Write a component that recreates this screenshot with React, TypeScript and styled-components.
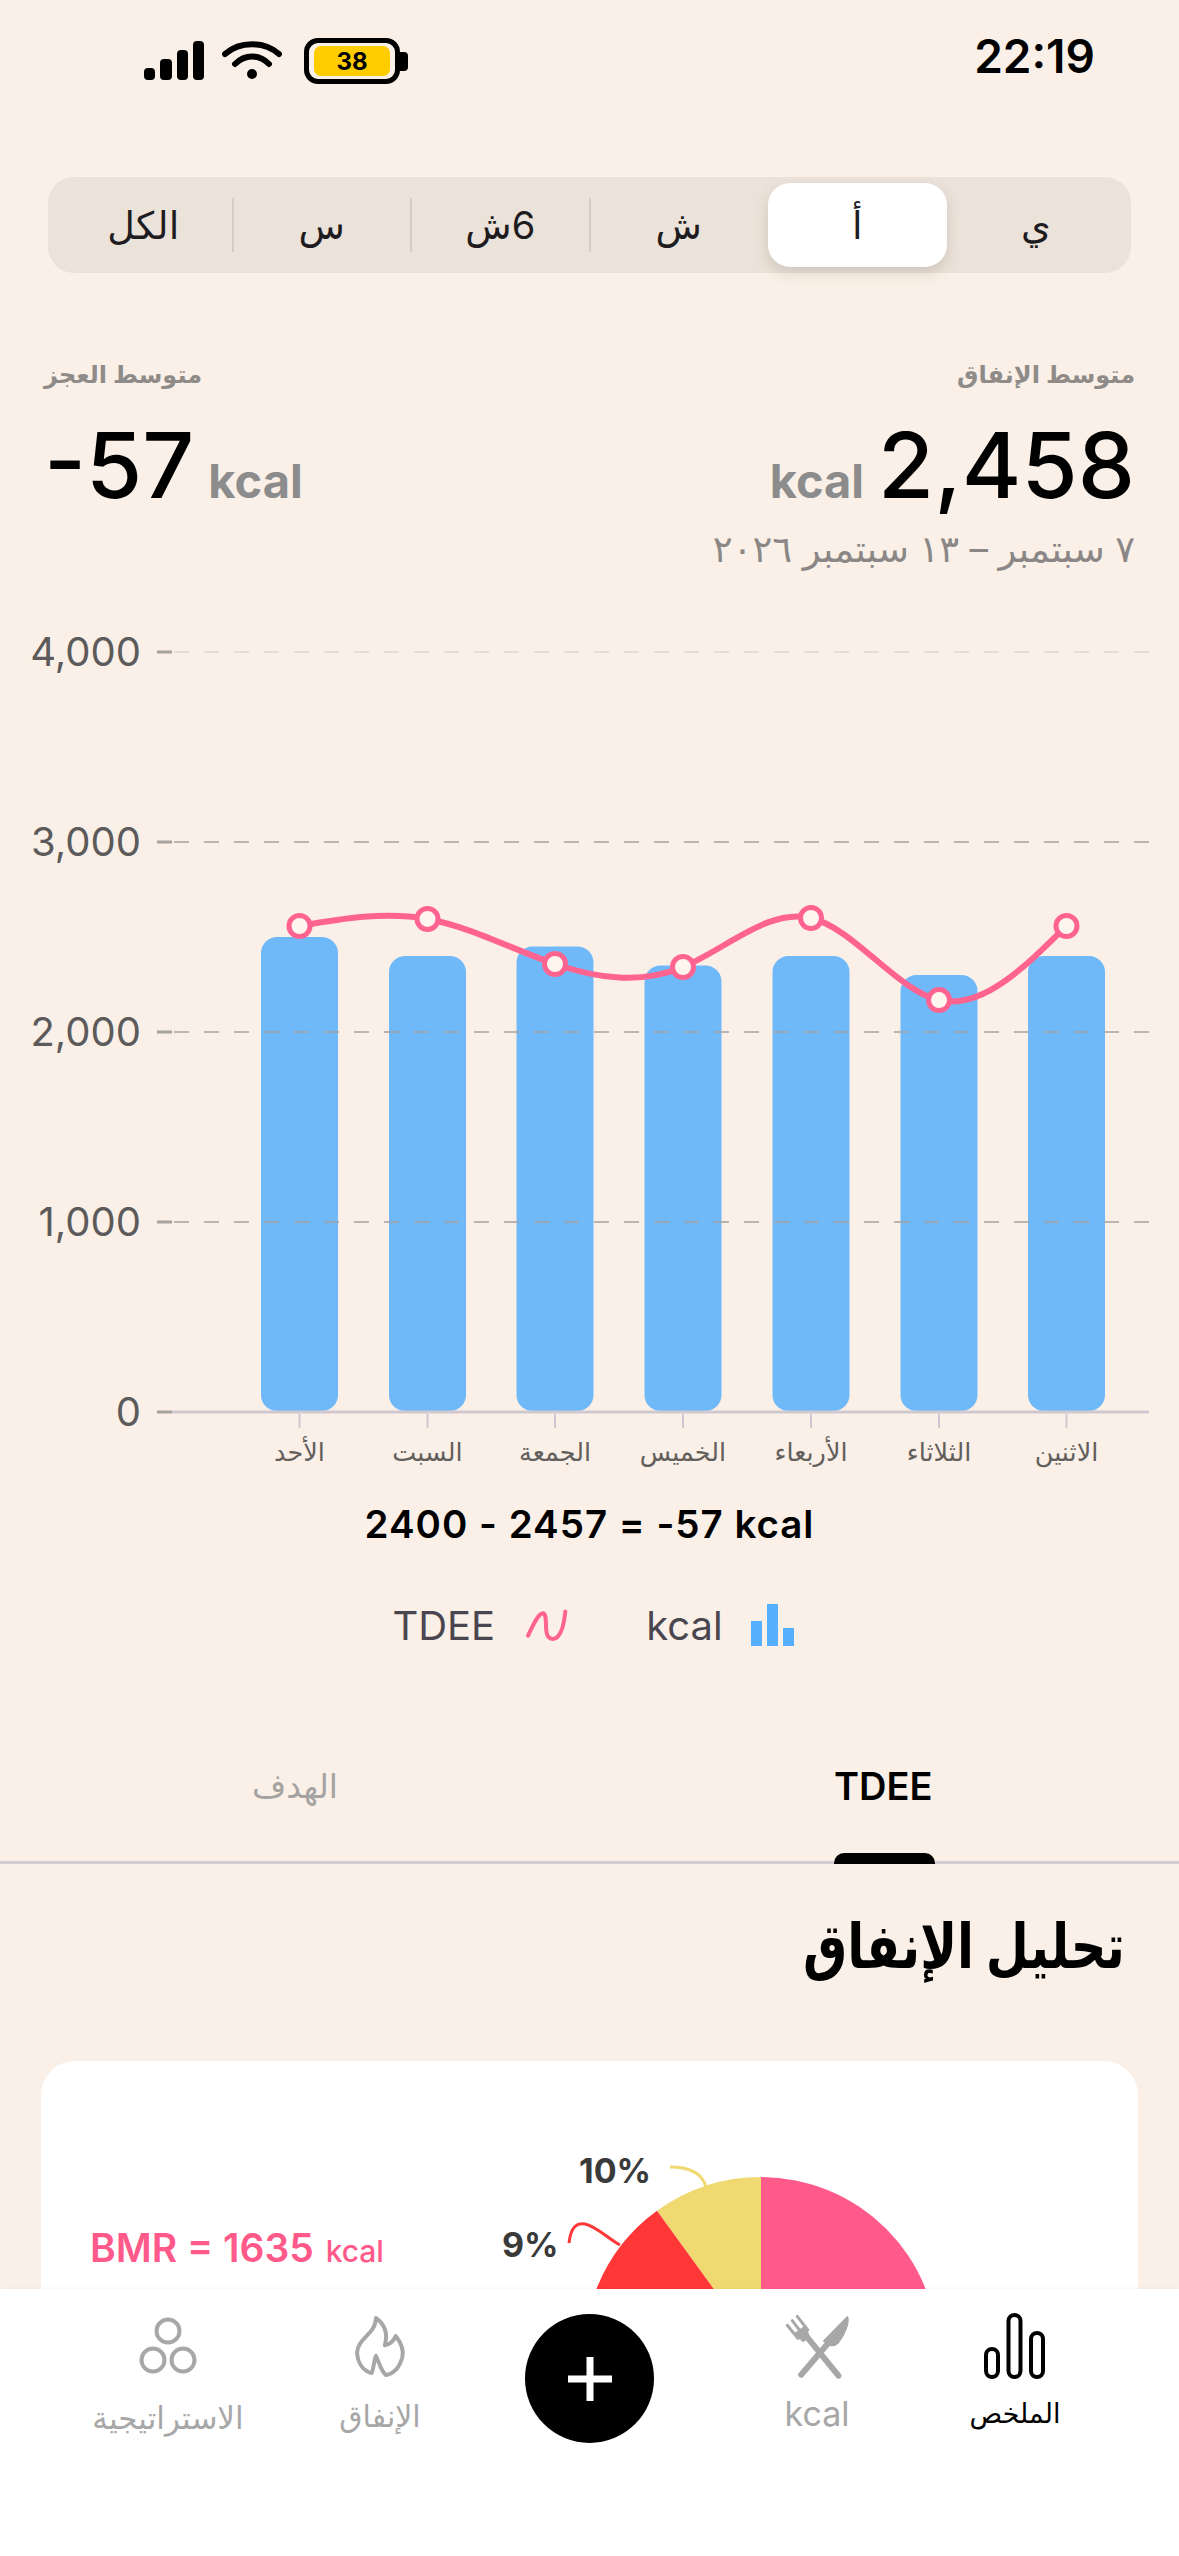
import React from 'react';
import styled, { createGlobalStyle } from 'styled-components';

const GlobalStyle = createGlobalStyle`
  html, body {
    margin: 0;
    padding: 0;
    background: #faf0e7;
    font-family: Inter, "DejaVu Sans", sans-serif;
  }
`;

const Page = styled.div`
  position: relative;
  width: 1179px;
  height: 2556px;
  overflow: hidden;
  background: #faf0e7;
`;

const StatusBar = styled.div`
  display: flex;
  justify-content: space-between;
  align-items: center;
  height: 112px;
  padding: 0 84px 0 144px;
  box-sizing: border-box;
`;

const StatusIcons = styled.div`
  display: flex;
  align-items: center;
  gap: 18px;
  margin-top: 10px;
`;

const Battery = styled.div`
  position: relative;
  display: flex;
  align-items: center;
  justify-content: center;
  width: 96px;
  height: 46px;
  margin-left: 4px;
  box-sizing: border-box;
  border: 5px solid #000;
  border-radius: 14px;

  &::before {
    content: '';
    position: absolute;
    right: -13px;
    top: 9px;
    width: 8px;
    height: 19px;
    background: #000;
    border-radius: 0 4px 4px 0;
  }
`;

const BatteryFill = styled.div`
  display: flex;
  align-items: center;
  justify-content: center;
  width: 76px;
  height: 30px;
  background: #ffcc00;
  border-radius: 7px;
  font-size: 24px;
  font-weight: 700;
  color: #000;
`;

const Clock = styled.div`
  font-size: 46px;
  font-weight: 600;
  color: #000;
`;

const Segments = styled.div`
  direction: rtl;
  display: flex;
  margin: 65px 48px 0;
  height: 96px;
  padding: 6px;
  box-sizing: border-box;
  background: #ebe2d9;
  border-radius: 26px;
`;

const Segment = styled.div<{ $active?: boolean; $divider?: boolean }>`
  position: relative;
  flex: 1;
  display: flex;
  align-items: center;
  justify-content: center;
  font-size: 38px;
  color: #1e1c1f;
  border-radius: 22px;
  background: ${props => (props.$active ? '#fff' : 'transparent')};
  box-shadow: ${props => (props.$active ? '0 6px 14px rgba(90, 70, 60, 0.18)' : 'none')};

  &::after {
    content: '';
    display: ${props => (props.$divider ? 'block' : 'none')};
    position: absolute;
    left: -1px;
    top: 15px;
    width: 2px;
    height: 54px;
    background: #d5cdc4;
  }
`;

const Stats = styled.div`
  direction: rtl;
  display: flex;
  justify-content: space-between;
  height: 347px;
  padding: 84px 44px 0 44px;
  box-sizing: border-box;
`;

const StatColumn = styled.div<{ $end?: boolean }>`
  display: flex;
  flex-direction: column;
  align-items: ${props => (props.$end ? 'flex-end' : 'flex-start')};
`;

const StatLabel = styled.div`
  font-size: 24px;
  line-height: 36px;
  font-weight: 600;
  color: #8f8b88;
`;

const StatValueRow = styled.div`
  direction: ltr;
  display: flex;
  align-items: baseline;
  gap: 14px;
  margin-top: 20px;
`;

const StatValue = styled.span`
  font-size: 91px;
  line-height: 104px;
  font-weight: 500;
  color: #000;
`;

const StatUnit = styled.span`
  font-size: 47px;
  font-weight: 700;
  color: #8c8c8c;
`;

const StatRange = styled.div`
  font-size: 37px;
  line-height: 44px;
  margin-top: 10px;
  color: #8a8786;
`;

const ChartSvg = styled.svg`
  display: block;
  width: 1179px;
  height: 860px;
`;

const AxisLabel = styled.text`
  font-size: 40px;
  fill: #5c5a5a;
  text-anchor: end;
`;

const DayLabel = styled.text`
  font-size: 25.5px;
  fill: #625e5c;
  text-anchor: middle;
`;

const Formula = styled.div`
  margin-top: 18px;
  text-align: center;
  font-size: 38.5px;
  line-height: 52px;
  font-weight: 600;
  letter-spacing: 1px;
  color: #000;
`;

const Legend = styled.div`
  display: flex;
  justify-content: center;
  align-items: center;
  gap: 76px;
  margin-top: 50px;
  padding-left: 8px;
  height: 50px;
`;

const LegendItem = styled.div`
  display: flex;
  align-items: center;
  gap: 28px;
  font-size: 40px;
  color: #4a4650;
`;

const Tabs = styled.div`
  display: grid;
  grid-template-columns: 589px 590px;
  height: 214px;
  border-bottom: 3px solid #d3ccd0;
  box-sizing: border-box;
  padding-top: 111px;
`;

const Tab = styled.div<{ $active?: boolean }>`
  position: relative;
  padding-left: ${props => (props.$active ? '245px' : '252px')};
  height: 100px;
  font-size: ${props => (props.$active ? '38px' : '33px')};
  line-height: 50px;
  font-weight: ${props => (props.$active ? 600 : 400)};
  color: ${props => (props.$active ? '#000' : '#a5a3a1')};

  &::after {
    content: '';
    display: ${props => (props.$active ? 'block' : 'none')};
    position: absolute;
    left: 245px;
    bottom: -3px;
    width: 101px;
    height: 11px;
    background: #000;
    border-radius: 10px 10px 0 0;
  }
`;

const SectionTitle = styled.h2`
  direction: rtl;
  margin: 39px 54px 0 0;
  height: 142px;
  font-size: 62px;
  line-height: 86px;
  font-weight: 700;
  color: #000;
  transform: scaleX(0.8);
  transform-origin: right center;
`;

const Card = styled.div`
  display: grid;
  grid-template-columns: 449px 1fr;
  margin: 16px 41px 0;
  height: 500px;
  background: #fff;
  border-radius: 34px;
`;

const BmrLabel = styled.div`
  padding: 160px 0 0 49px;
  font-size: 39px;
  line-height: 54px;
  font-weight: 600;
  color: #ff5a8a;
`;

const BmrUnit = styled.span`
  font-size: 30px;
  font-weight: 500;
  margin-left: 2px;
`;

const PieSvg = styled.svg`
  display: block;
  width: 470px;
  height: 300px;
  margin-top: 89px;
`;

const PieLabel = styled.text`
  font-size: 34px;
  font-weight: 700;
  fill: #3a3a3a;
`;

const BottomNav = styled.nav`
  position: absolute;
  left: 0;
  right: 0;
  bottom: 0;
  height: 267px;
  direction: rtl;
  display: grid;
  grid-template-columns: 200px 196px 259px 160px 264px;
  align-items: start;
  padding: 21px 64px 0 0;
  box-sizing: border-box;
  background: #fff;
  box-shadow: 0 -1px 3px rgba(0, 0, 0, 0.03);
`;

const NavItem = styled.div<{ $active?: boolean }>`
  display: flex;
  flex-direction: column;
  align-items: center;
  color: ${props => (props.$active ? '#000' : '#a7a7a7')};
`;

const NavLabel = styled.span<{ $size: number; $drop?: number }>`
  font-size: ${props => props.$size}px;
  line-height: 40px;
  margin-top: ${props => props.$drop ?? 0}px;
`;

const NavIconSlot = styled.div`
  display: flex;
  align-items: center;
  justify-content: center;
  height: 72px;
  margin-bottom: 12px;
`;

const AddButton = styled.div`
  justify-self: center;
  display: flex;
  align-items: center;
  justify-content: center;
  width: 129px;
  height: 129px;
  margin-top: 4px;
  border-radius: 50%;
  background: #000;
`;

const Y_BASE = 1412;
const Y_SCALE = 0.19;
const yOf = (value: number) => Y_BASE - value * Y_SCALE;

const days = [
  { name: 'الأحد', x: 299.5, intake: 2500, tdee: 2558 },
  { name: 'السبت', x: 427.5, intake: 2400, tdee: 2595 },
  { name: 'الجمعة', x: 555, intake: 2450, tdee: 2358 },
  { name: 'الخميس', x: 683, intake: 2350, tdee: 2342 },
  { name: 'الأربعاء', x: 811, intake: 2400, tdee: 2600 },
  { name: 'الثلاثاء', x: 939, intake: 2300, tdee: 2168 },
  { name: 'الاثنين', x: 1066.5, intake: 2400, tdee: 2558 },
];

// same maths as d3's curveNatural
function naturalControls(x: number[]): [number[], number[]] {
  const n = x.length - 1;
  const a: number[] = [0];
  const b: number[] = [2];
  const r: number[] = [x[0] + 2 * x[1]];
  for (let i = 1; i < n - 1; i++) {
    a[i] = 1;
    b[i] = 4;
    r[i] = 4 * x[i] + 2 * x[i + 1];
  }
  a[n - 1] = 2;
  b[n - 1] = 7;
  r[n - 1] = 8 * x[n - 1] + x[n];
  for (let i = 1; i < n; i++) {
    const m = a[i] / b[i - 1];
    b[i] -= m;
    r[i] -= m * r[i - 1];
  }
  a[n - 1] = r[n - 1] / b[n - 1];
  for (let i = n - 2; i >= 0; i--) a[i] = (r[i] - a[i + 1]) / b[i];
  b[n - 1] = (x[n] + a[n - 1]) / 2;
  for (let i = 0; i < n - 1; i++) b[i] = 2 * x[i + 1] - a[i + 1];
  return [a, b];
}

function tdeePath(): string {
  const xs = days.map(d => d.x);
  const ys = days.map(d => yOf(d.tdee));
  const [ax, bx] = naturalControls(xs);
  const [ay, by] = naturalControls(ys);
  let path = `M${xs[0]} ${ys[0]}`;
  for (let i = 0; i < xs.length - 1; i++) {
    path += `C${ax[i]} ${ay[i]} ${bx[i]} ${by[i]} ${xs[i + 1]} ${ys[i + 1]}`;
  }
  return path;
}

const Chart = () => (
  <ChartSvg viewBox="0 620 1179 860">
    {days.map(d => (
      <rect
        key={d.name}
        x={d.x - 38.5}
        y={yOf(d.intake)}
        width={77}
        height={Y_BASE - yOf(d.intake) - 1}
        rx={16}
        fill="#70b9f9"
      />
    ))}
    {[4000, 3000, 2000, 1000, 0].map(tick => (
      <g key={tick}>
        <AxisLabel x={141} y={yOf(tick) + 14}>{tick.toLocaleString('en-US')}</AxisLabel>
        {tick > 0 && (
          <line
            x1={174}
            x2={1149}
            y1={yOf(tick)}
            y2={yOf(tick)}
            stroke={tick === 4000 ? '#e0d8d0' : '#a5a19e'}
            strokeWidth={1.5}
            strokeDasharray="15 15"
          />
        )}
        <rect x={157} y={yOf(tick) - 1.5} width={15} height={3} fill="#a6a29e" />
      </g>
    ))}
    <rect x={172} y={Y_BASE - 1.5} width={977} height={3} fill="#cfc8d0" />
    {days.map(d => (
      <g key={d.name}>
        <rect x={d.x - 1} y={Y_BASE + 2} width={2} height={14} fill="#cfc8d0" />
        <DayLabel x={d.x} y={1461}>{d.name}</DayLabel>
      </g>
    ))}
    <path d={tdeePath()} fill="none" stroke="#ff6491" strokeWidth={6} />
    {days.map(d => (
      <circle key={d.name} cx={d.x} cy={yOf(d.tdee)} r={10.5} fill="#fdf5ee" stroke="#ff6491" strokeWidth={5} />
    ))}
  </ChartSvg>
);

const PIE_X = 761;
const PIE_Y = 2354;
const PIE_R = 177;

function slice(fromDeg: number, toDeg: number): string {
  const point = (deg: number) => {
    const rad = (deg * Math.PI) / 180;
    return `${PIE_X + PIE_R * Math.sin(rad)} ${PIE_Y - PIE_R * Math.cos(rad)}`;
  };
  return `M${PIE_X} ${PIE_Y}L${point(fromDeg)}A${PIE_R} ${PIE_R} 0 0 1 ${point(toDeg)}Z`;
}

const Pie = () => (
  <PieSvg viewBox="490 2150 470 300">
    <path d={slice(0, 179.9)} fill="#ff5a8a" />
    <path d={slice(-36, 0)} fill="#f1d972" />
    <path d={slice(-68.4, -36)} fill="#ff3737" />
    <path d={slice(-180, -68.4)} fill="#f5873a" />
    <path d="M670 2167C688 2167 702 2172 706 2187" fill="none" stroke="#f1d972" strokeWidth={3} />
    <path d="M569 2243C571 2226 577 2223 585 2224C596 2226 610 2240 620 2245" fill="none" stroke="#ff3737" strokeWidth={3} />
    <PieLabel x={579} y={2183}>10%</PieLabel>
    <PieLabel x={502} y={2257}>9%</PieLabel>
  </PieSvg>
);

const SignalIcon = () => (
  <svg width="60" height="40" viewBox="0 0 60 40">
    <rect x="0" y="27" width="11" height="12" rx="4" fill="#000" />
    <rect x="16" y="18" width="12" height="21" rx="4" fill="#000" />
    <rect x="33" y="9" width="11" height="30" rx="4" fill="#000" />
    <rect x="49" y="0" width="11" height="39" rx="4" fill="#000" />
  </svg>
);

const WifiIcon = () => (
  <svg width="60" height="40" viewBox="0 0 60 40">
    <path d="M3 13C18 0 42 0 57 13" fill="none" stroke="#000" strokeWidth="6" strokeLinecap="round" />
    <path d="M13 23C23 13 37 13 47 23" fill="none" stroke="#000" strokeWidth="6" strokeLinecap="round" />
    <circle cx="30" cy="33" r="5" fill="#000" />
  </svg>
);

const FlameIcon = () => (
  <svg width="58" height="66" viewBox="660 30 175 200">
    <path
      d="M735 45C770 70 770 100 762 128C780 125 790 112 795 100C815 125 820 145 815 165C805 200 785 215 765 218C750 205 745 180 735 160C728 175 730 195 722 212C695 205 680 180 678 150C680 105 735 95 735 45Z"
      fill="none"
      stroke="#a7a7a7"
      strokeWidth="12"
      strokeLinejoin="round"
    />
  </svg>
);

const StrategyIcon = () => (
  <svg width="58" height="58" viewBox="0 0 58 58" fill="none" stroke="#a7a7a7" strokeWidth="4">
    <circle cx="29" cy="14" r="11.5" />
    <circle cx="14" cy="43" r="11.5" />
    <circle cx="44" cy="43" r="11.5" />
  </svg>
);

const CutleryIcon = () => (
  <svg width="66" height="66" viewBox="40 25 200 200" fill="#a7a7a7" stroke="#a7a7a7" strokeLinecap="round">
    <path d="M92 212L175 115" strokeWidth="18" />
    <path d="M232 36C240 50 225 90 205 115C195 125 185 125 175 122L160 110Z" strokeWidth="4" strokeLinejoin="round" />
    <path d="M205 215L105 92" strokeWidth="18" />
    <path d="M50 62L82 102M65 48L97 90M80 35L112 76" strokeWidth="9" />
    <path d="M70 88L106 62L118 100L98 112Z" strokeWidth="2" />
  </svg>
);

const SummaryIcon = () => (
  <svg width="62" height="66" viewBox="0 0 62 66" fill="none" stroke="#000" strokeWidth="4">
    <rect x="2" y="36" width="12" height="28" rx="6" />
    <rect x="24.5" y="2" width="12" height="62" rx="6" />
    <rect x="47" y="20" width="12" height="44" rx="6" />
  </svg>
);

const SquiggleIcon = () => (
  <svg width="47" height="34" viewBox="60 30 140 100">
    <path d="M75 112C90 80 105 45 120 45C135 50 122 100 135 115C150 130 178 125 186 40" fill="none" stroke="#ff6491" strokeWidth="12" strokeLinecap="round" />
  </svg>
);

const BarsIcon = () => (
  <svg width="44" height="42" viewBox="0 0 44 42" fill="#56b0ff">
    <rect x="0" y="17" width="11" height="25" />
    <rect x="16" y="0" width="11" height="42" />
    <rect x="32" y="24" width="11" height="18" />
  </svg>
);

export default function App() {
  return (
    <>
      <GlobalStyle />
      <Page>
        <StatusBar>
          <StatusIcons>
            <SignalIcon />
            <WifiIcon />
            <Battery>
              <BatteryFill>38</BatteryFill>
            </Battery>
          </StatusIcons>
          <Clock>22:19</Clock>
        </StatusBar>

        <Segments>
          <Segment>ي</Segment>
          <Segment $active>أ</Segment>
          <Segment $divider>ش</Segment>
          <Segment $divider>6ش</Segment>
          <Segment $divider>س</Segment>
          <Segment>الكل</Segment>
        </Segments>

        <Stats>
          <StatColumn>
            <StatLabel>متوسط الإنفاق</StatLabel>
            <StatValueRow>
              <StatUnit>kcal</StatUnit>
              <StatValue>2,458</StatValue>
            </StatValueRow>
            <StatRange>٧ سبتمبر – ١٣ سبتمبر ٢٠٢٦</StatRange>
          </StatColumn>
          <StatColumn $end>
            <StatLabel>متوسط العجز</StatLabel>
            <StatValueRow>
              <StatValue>-57</StatValue>
              <StatUnit>kcal</StatUnit>
            </StatValueRow>
          </StatColumn>
        </Stats>

        <Chart />

        <Formula>2400 - 2457 = -57 kcal</Formula>

        <Legend>
          <LegendItem>TDEE <SquiggleIcon /></LegendItem>
          <LegendItem>kcal <BarsIcon /></LegendItem>
        </Legend>

        <Tabs>
          <Tab>الهدف</Tab>
          <Tab $active>TDEE</Tab>
        </Tabs>

        <SectionTitle>تحليل الإنفاق</SectionTitle>

        <Card>
          <BmrLabel>BMR = 1635 <BmrUnit>kcal</BmrUnit></BmrLabel>
          <Pie />
        </Card>

        <BottomNav>
          <NavItem $active>
            <NavIconSlot><SummaryIcon /></NavIconSlot>
            <NavLabel $size={27}>الملخص</NavLabel>
          </NavItem>
          <NavItem>
            <NavIconSlot><CutleryIcon /></NavIconSlot>
            <NavLabel $size={34}>kcal</NavLabel>
          </NavItem>
          <AddButton>
            <svg width="44" height="44" viewBox="0 0 44 44" fill="#fff">
              <rect x="18.5" y="0" width="7" height="44" />
              <rect x="0" y="18.5" width="44" height="7" />
            </svg>
          </AddButton>
          <NavItem>
            <NavIconSlot><FlameIcon /></NavIconSlot>
            <NavLabel $size={30} $drop={2}>الإنفاق</NavLabel>
          </NavItem>
          <NavItem>
            <NavIconSlot><StrategyIcon /></NavIconSlot>
            <NavLabel $size={31} $drop={4}>الاستراتيجية</NavLabel>
          </NavItem>
        </BottomNav>
      </Page>
    </>
  );
}
